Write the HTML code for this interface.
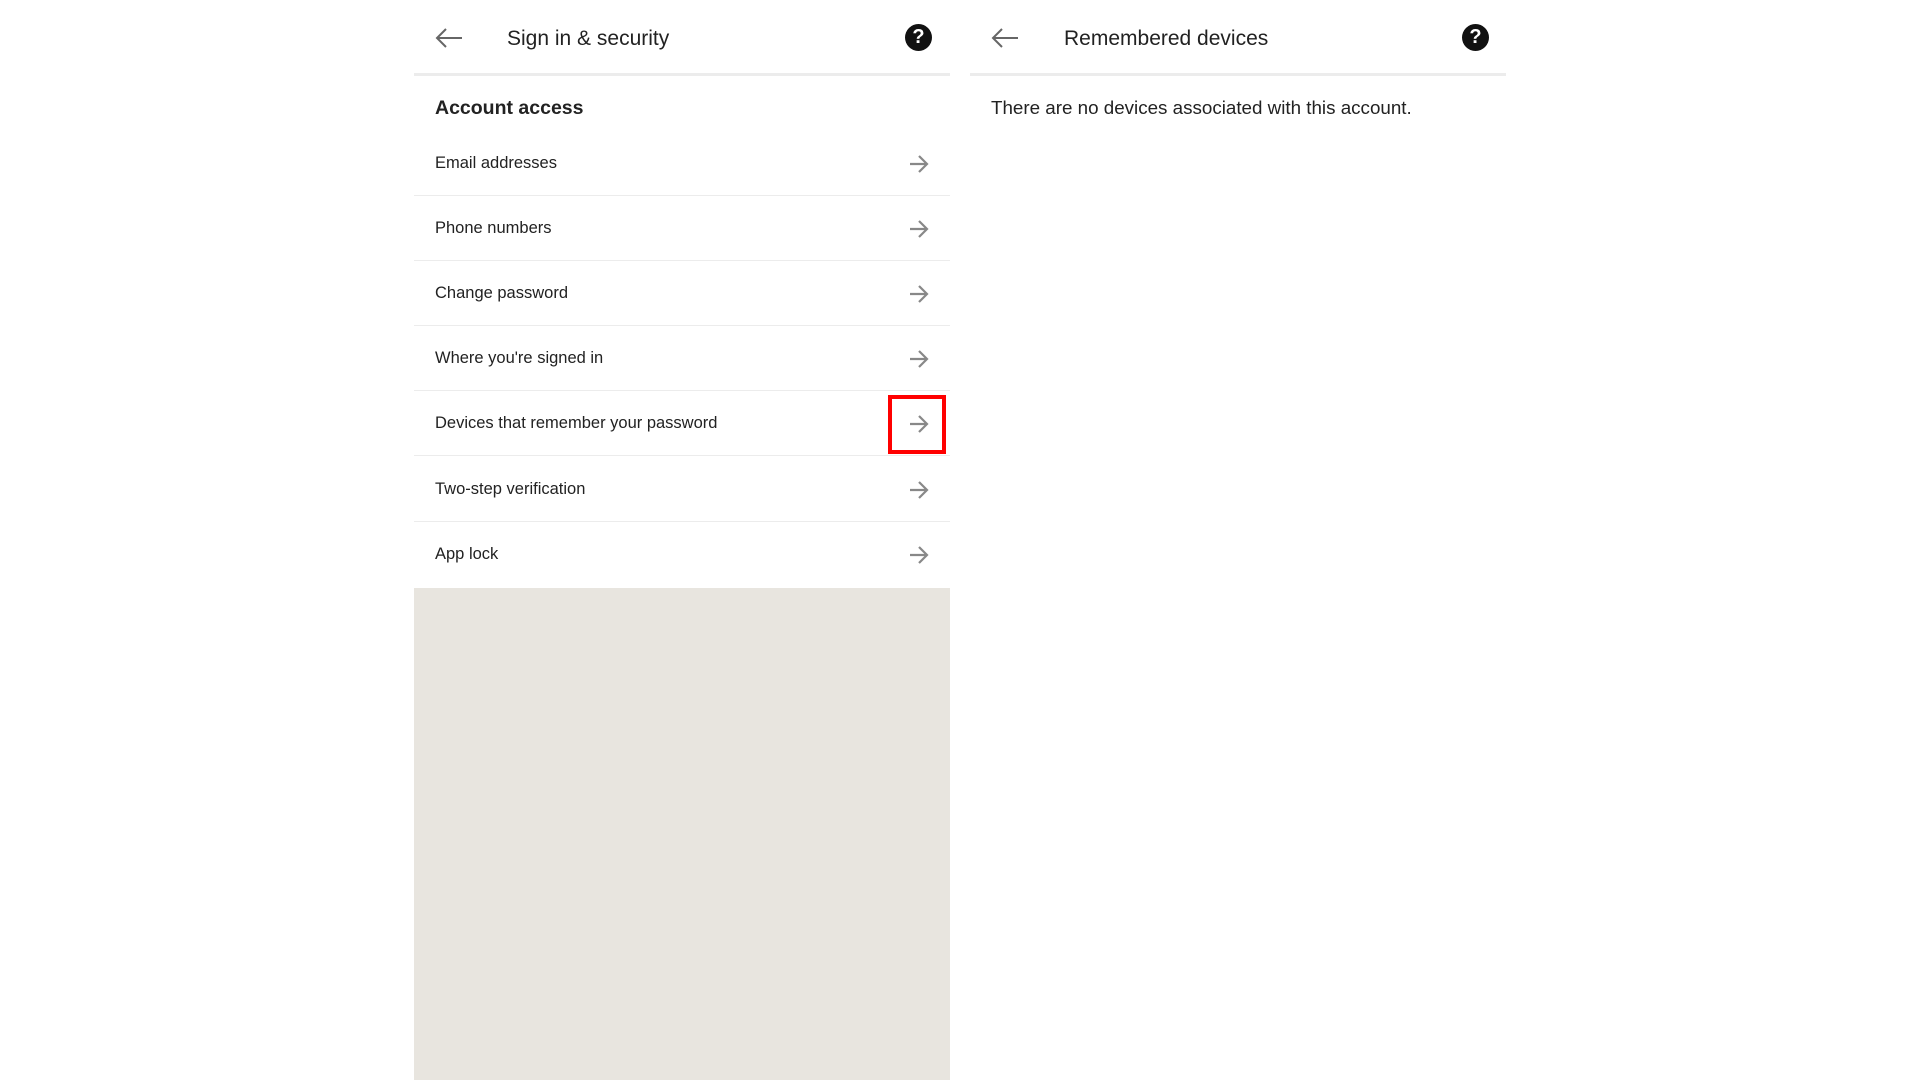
<!DOCTYPE html>
<html><head><meta charset="utf-8"><style>
*{margin:0;padding:0;box-sizing:border-box}
body{width:1920px;height:1080px;background:#fff;font-family:"Liberation Sans",Roboto,sans-serif;color:#222;position:relative;overflow:hidden}
.panel{position:absolute;top:0;width:536px;height:1080px;background:#fff}
.hdr{position:absolute;top:0;left:0;right:0;height:76px;border-bottom:3px solid #ececec}
.back{position:absolute;left:20px;top:26px}
.title{position:absolute;left:93px;top:27px;font-size:21px;color:#222}
.help{position:absolute;top:24px;width:27px;height:27px;border-radius:50%;background:#111;color:#fff;font-weight:bold;font-size:20px;text-align:center;line-height:27px}
.sec{position:absolute;left:21px;top:97px;font-size:19.5px;font-weight:bold;color:#222}
.row{position:absolute;left:0;right:0;height:65px;border-bottom:1px solid #ececec}
.row span{position:absolute;left:21px;top:23px;font-size:16.5px;color:#222}
.row svg{position:absolute;right:20px;top:23px}
.gray{position:absolute;left:0;right:0;top:588px;bottom:0;background:#e8e5df}
.red{position:absolute;left:474px;top:395px;width:58px;height:59px;border:4px solid #f00}
</style></head><body>
<div class="panel" style="left:414px">
 <div class="hdr">
  <svg class="back" width="30" height="24" viewBox="0 0 30 24"><path d="M28 12H3M12 3L3 12l9 9" fill="none" stroke="#666" stroke-width="2"/></svg>
  <div class="title">Sign in &amp; security</div>
  <div class="help" style="left:491px">?</div>
 </div>
 <div class="sec">Account access</div>
 <div class="row" style="top:131px"><span>Email addresses</span><svg width="22" height="20" viewBox="0 0 22 20"><path d="M2 10h17M11 2l8 8-8 8" fill="none" stroke="#888" stroke-width="2.2"/></svg></div>
 <div class="row" style="top:196px"><span>Phone numbers</span><svg width="22" height="20" viewBox="0 0 22 20"><path d="M2 10h17M11 2l8 8-8 8" fill="none" stroke="#888" stroke-width="2.2"/></svg></div>
 <div class="row" style="top:261px"><span>Change password</span><svg width="22" height="20" viewBox="0 0 22 20"><path d="M2 10h17M11 2l8 8-8 8" fill="none" stroke="#888" stroke-width="2.2"/></svg></div>
 <div class="row" style="top:326px"><span>Where you're signed in</span><svg width="22" height="20" viewBox="0 0 22 20"><path d="M2 10h17M11 2l8 8-8 8" fill="none" stroke="#888" stroke-width="2.2"/></svg></div>
 <div class="row" style="top:391px"><span>Devices that remember your password</span><svg width="22" height="20" viewBox="0 0 22 20"><path d="M2 10h17M11 2l8 8-8 8" fill="none" stroke="#888" stroke-width="2.2"/></svg></div>
 <div class="row" style="top:457px"><span>Two-step verification</span><svg width="22" height="20" viewBox="0 0 22 20"><path d="M2 10h17M11 2l8 8-8 8" fill="none" stroke="#888" stroke-width="2.2"/></svg></div>
 <div class="row" style="top:522px;border-bottom:none"><span>App lock</span><svg width="22" height="20" viewBox="0 0 22 20"><path d="M2 10h17M11 2l8 8-8 8" fill="none" stroke="#888" stroke-width="2.2"/></svg></div>
 <div class="gray"></div>
 <div class="red"></div>
</div>
<div class="panel" style="left:970px">
 <div class="hdr">
  <svg class="back" width="30" height="24" viewBox="0 0 30 24"><path d="M28 12H3M12 3L3 12l9 9" fill="none" stroke="#666" stroke-width="2"/></svg>
  <div class="title" style="left:94px">Remembered devices</div>
  <div class="help" style="left:492px">?</div>
 </div>
 <div style="position:absolute;left:21px;top:97px;font-size:18.8px;color:#222">There are no devices associated with this account.</div>
</div>
</body></html>
